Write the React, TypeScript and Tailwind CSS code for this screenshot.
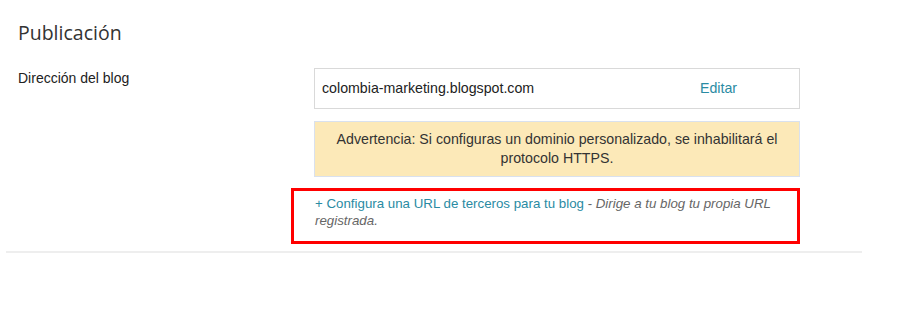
export default function App() {
  return (
    <div className="min-h-[319px] bg-white font-['Liberation_Sans',Arial,sans-serif]">
      <section className="ml-[6px] w-[856px] border-b-2 border-[#eeeeee] pb-[22px] pl-[12px]">
        <h2 className="pt-[18px] font-['Open_Sans',sans-serif] text-[19.5px] leading-[30px] text-[#333333]">
          Publicación
        </h2>

        <div className="mt-[20px] flex">
          <div className="w-[296px] text-[14px] leading-[20px] text-[#222222]">Dirección del blog</div>

          <div className="w-[486px]">
            {/* Current address */}
            <div className="flex h-[41px] items-center border border-[#d9d9d9] px-[7px] text-[14.2px] text-[#222222]">
              <span className="w-[378px]">colombia-marketing.blogspot.com</span>
              <a href="#" className="text-[#2a8ba3]">Editar</a>
            </div>

            {/* Warning */}
            <div className="mt-[12px] border border-[#d9e1ee] bg-[#fce9b8] px-4 py-2 text-center text-[14.2px] leading-[19px] text-[#333333]">
              Advertencia: Si configuras un dominio personalizado, se inhabilitará el protocolo HTTPS.
            </div>

            {/* Third party URL */}
            <div className="relative mt-[18px] pl-px text-[13.3px] leading-[17px]">
              <a href="#" className="text-[#2a8ba3]">+ Configura una URL de terceros para tu blog</a>
              <span className="text-[#666666]"> - </span>
              <em className="text-[#666666]">Dirige a tu blog tu propia URL registrada.</em>
              <span className="pointer-events-none absolute -top-[7px] -bottom-[15px] -left-[23px] right-0 border-[3px] border-[#ff0000]" />
            </div>
          </div>
        </div>
      </section>
    </div>
  )
}
